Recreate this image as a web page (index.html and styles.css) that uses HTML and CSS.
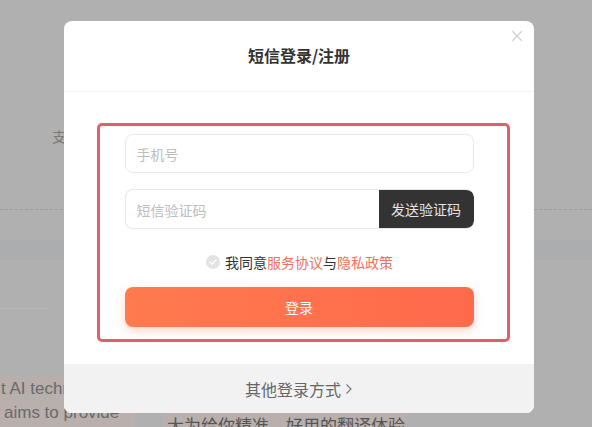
FILE: index.html
```html
<!DOCTYPE html>
<html lang="zh-CN">
<head>
<meta charset="utf-8">
<title>短信登录/注册</title>
<link rel="stylesheet" href="styles.css">
</head>
<body>
<div class="page">
  <div class="hero"></div>
  <div class="hero-line">支持多种语言翻译</div>
  <div class="dash"></div>
  <div class="band"></div>
  <div class="rule"></div>
  <div class="bottom">
    <div class="col-left">
      <div class="row1">t AI technology</div>
      <div class="row2">aims to provide</div>
    </div>
    <div class="col-right">大为给你精准、好用的翻译体验。</div>
  </div>
</div>

<div class="modal">
  <div class="modal-head">
    <h2 class="title">短信登录/注册</h2>
    <svg class="close" width="12" height="12" viewBox="0 0 12 12"><path d="M1 1L11 11M11 1L1 11" stroke="#cfcfcf" stroke-width="1.2" fill="none"/></svg>
  </div>
  <div class="modal-body">
    <div class="form">
      <div class="field"><span class="ph">手机号</span></div>
      <div class="code-row">
        <div class="code-input"><span class="ph">短信验证码</span></div>
        <div class="send">发送验证码</div>
      </div>
      <div class="agree">
        <span class="check"><svg width="14" height="14" viewBox="0 0 14 14"><path d="M4 7.2L6.1 9.2L10 5" stroke="#fff" stroke-width="1.4" fill="none" stroke-linecap="round" stroke-linejoin="round"/></svg></span>
        <span class="agree-text">我同意<a class="link">服务协议</a>与<a class="link">隐私政策</a></span>
      </div>
      <div class="login">登录</div>
    </div>
    <div class="highlight"></div>
  </div>
  <div class="modal-foot">其他登录方式<svg class="chev" width="8" height="12" viewBox="0 0 8 12"><path d="M1.5 1.5L6 6L1.5 10.5" stroke="#777" stroke-width="1.1" fill="none"/></svg></div>
</div>
</body>
</html>
```

FILE: styles.css
```css
* { box-sizing: border-box; }
html, body {
  margin: 0;
  padding: 0;
  width: 592px;
  height: 427px;
  overflow: hidden;
  background: #b0b0b0;
  font-family: "Noto Sans CJK SC", "Noto Sans", sans-serif;
}
.page {
  position: relative;
  height: 427px;
  overflow: hidden;
}
.hero { height: 126px; }
.hero-line {
  padding-left: 52px;
  font-size: 14px;
  line-height: 20px;
  color: #7a7a7a;
  white-space: nowrap;
}
.dash {
  margin-top: 63px;
  border-top: 1px dashed #9c9c9c;
}
.band {
  margin-top: 30px;
  height: 20px;
  background: #acadaf;
}
.rule {
  margin-top: 48px;
  width: 48px;
  border-top: 1px solid #bababa;
}
.bottom {
  margin-top: 66px;
  display: flex;
  align-items: flex-start;
}
.col-left {
  width: 135px;
  font-family: "Liberation Sans", Arial, sans-serif;
  font-size: 17px;
  line-height: 24px;
  color: #6a6a6a;
  white-space: nowrap;
}
.row1 { padding-left: 1px; background: #b6afac; width: 70px; padding-top: 2px; }
.row2 { padding-left: 4px; background: #b9afac; height: 28px; }
.col-right {
  margin-left: 28px;
  margin-top: 38px;
  padding-left: 4px;
  width: 242px;
  height: 28px;
  background: #b9afac;
  font-size: 17px;
  line-height: 24px;
  color: #555;
  white-space: nowrap;
}

.modal {
  position: absolute;
  left: 64px;
  top: 21px;
  width: 470px;
  height: 392px;
  background: #fff;
  border-radius: 8px;
  overflow: hidden;
  display: flex;
  flex-direction: column;
}
.modal-head {
  position: relative;
  height: 71px;
  border-bottom: 1px solid #f3f3f3;
  display: flex;
  align-items: center;
  justify-content: center;
}
.title {
  margin: 0;
  font-size: 16px;
  font-weight: 700;
  color: #333;
  line-height: 22px;
  padding-bottom: 2px;
}
.close {
  position: absolute;
  top: 9px;
  right: 11px;
}
.modal-body {
  position: relative;
  flex: 1;
  padding-top: 42px;
}
.form {
  width: 349px;
  margin: 0 auto;
  display: flex;
  flex-direction: column;
}
.field, .code-row {
  height: 39px;
  border: 1px solid #e8e8e8;
  border-radius: 8px;
  display: flex;
  align-items: center;
}
.field { padding-left: 11px; }
.code-row {
  margin-top: 16px;
  height: 40px;
  overflow: hidden;
  border-right: none;
}
.code-input {
  flex: 1;
  padding-left: 11px;
}
.ph {
  font-size: 14px;
  color: #bdbdbd;
}
.send {
  width: 95px;
  height: 40px;
  margin: -1px 0;
  background: #333;
  color: #e4e4e4;
  font-size: 14px;
  display: flex;
  align-items: center;
  justify-content: center;
  border-radius: 0 8px 8px 0;
}
.agree {
  margin-top: 24px;
  height: 18px;
  display: flex;
  align-items: center;
  justify-content: center;
  gap: 5px;
  padding-left: 1px;
}
.check {
  width: 14px;
  height: 14px;
  border-radius: 50%;
  background: #e3e3e3;
  display: flex;
}
.agree-text {
  font-size: 14px;
  color: #333;
  line-height: 18px;
}
.link { color: #f0705a; }
.login {
  margin-top: 16px;
  height: 40px;
  border-radius: 8px;
  background: linear-gradient(90deg, #ff7a4f, #ff6a4b);
  box-shadow: 0 4px 8px rgba(255, 140, 90, 0.35);
  color: #fff;
  font-size: 14px;
  display: flex;
  align-items: center;
  justify-content: center;
}
.highlight {
  position: absolute;
  left: 33px;
  top: 31px;
  width: 413px;
  height: 219px;
  border: 3px solid #e0606e;
  border-radius: 5px;
  pointer-events: none;
}
.modal-foot {
  height: 49px;
  background: #f2f2f2;
  display: flex;
  align-items: center;
  justify-content: center;
  gap: 4px;
  font-size: 16px;
  color: #666;
}
.chev { margin-top: 1px; }
```
